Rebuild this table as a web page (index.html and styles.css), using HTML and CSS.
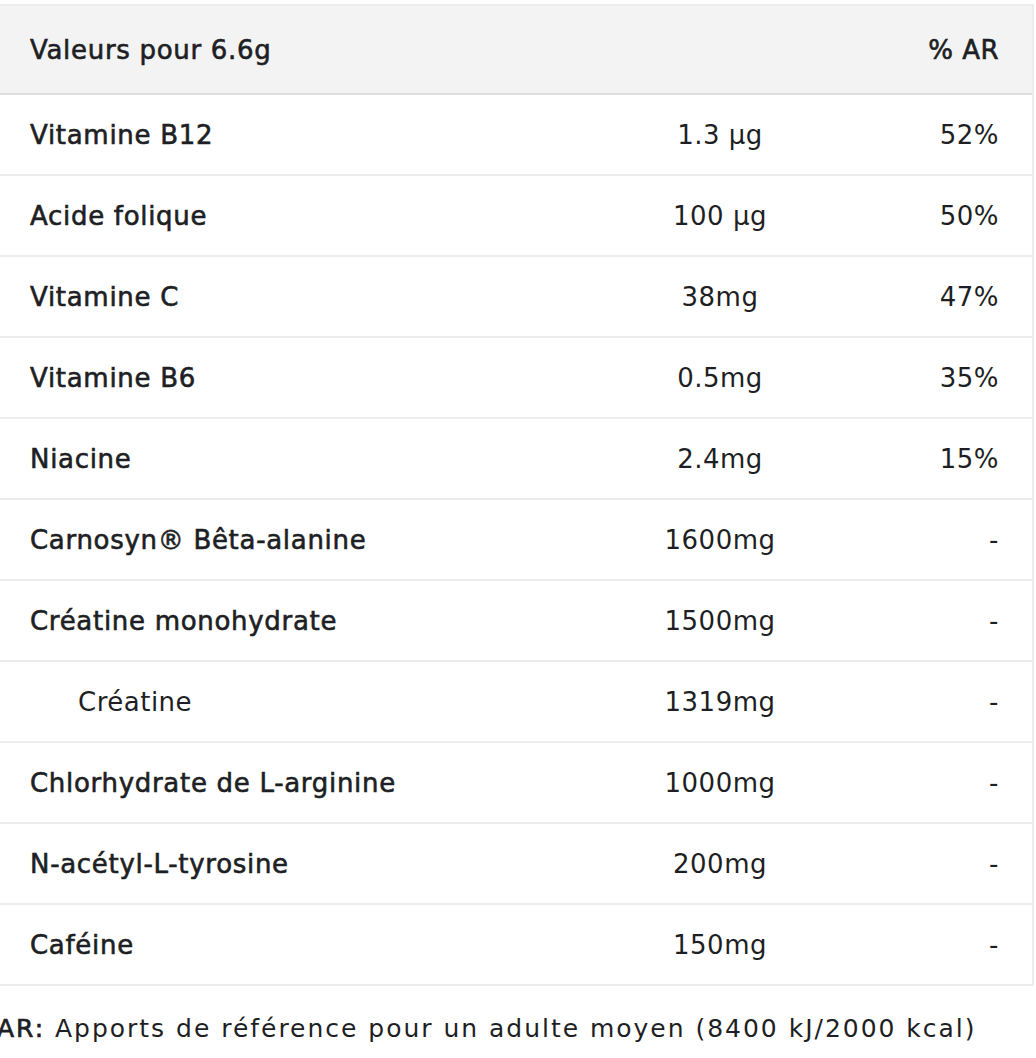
FILE: index.html
```html
<!DOCTYPE html>
<html lang="fr">
<head>
<meta charset="utf-8">
<title>Valeurs nutritionnelles</title>
<link rel="stylesheet" href="styles.css">
</head>
<body>
<div class="facts">
  <div class="row head">
    <div class="name">Valeurs pour 6.6g</div>
    <div class="val"></div>
    <div class="pct">% AR</div>
  </div>
  <div class="row"><div class="name">Vitamine B12</div><div class="val">1.3 µg</div><div class="pct">52%</div></div>
  <div class="row"><div class="name">Acide folique</div><div class="val">100 µg</div><div class="pct">50%</div></div>
  <div class="row"><div class="name">Vitamine C</div><div class="val">38mg</div><div class="pct">47%</div></div>
  <div class="row"><div class="name">Vitamine B6</div><div class="val">0.5mg</div><div class="pct">35%</div></div>
  <div class="row"><div class="name">Niacine</div><div class="val">2.4mg</div><div class="pct">15%</div></div>
  <div class="row"><div class="name">Carnosyn® Bêta-alanine</div><div class="val">1600mg</div><div class="pct">-</div></div>
  <div class="row"><div class="name">Créatine monohydrate</div><div class="val">1500mg</div><div class="pct">-</div></div>
  <div class="row"><div class="name sub">Créatine</div><div class="val">1319mg</div><div class="pct">-</div></div>
  <div class="row"><div class="name">Chlorhydrate de L-arginine</div><div class="val">1000mg</div><div class="pct">-</div></div>
  <div class="row"><div class="name">N-acétyl-L-tyrosine</div><div class="val">200mg</div><div class="pct">-</div></div>
  <div class="row last"><div class="name">Caféine</div><div class="val">150mg</div><div class="pct">-</div></div>
</div>
<p class="note"><strong>AR:</strong> Apports de référence pour un adulte moyen (8400 kJ/2000 kcal)</p>
</body>
</html>
```
FILE: styles.css
```css
html, body {
  margin: 0;
  padding: 0;
  background: #ffffff;
}
body {
  font-family: "DejaVu Sans", sans-serif;
  color: #1e1f24;
  padding-top: 4px;
  overflow: hidden;
}
.facts {
  box-sizing: border-box;
  width: 1036px;
  margin-left: -2px;
  border: 2px solid #ececec;
  border-bottom: none;
}
.row {
  box-sizing: border-box;
  display: grid;
  grid-template-columns: 560px 320px 1fr;
  align-items: center;
  height: 81px;
  border-bottom: 2px solid #ececec;
  font-size: 26px;
  letter-spacing: 0.5px;
}
.row.head {
  height: 89px;
  background: #f3f3f3;
  border-bottom-color: #dddddd;
}
.name {
  padding-left: 30px;
  letter-spacing: 0.7px;
  -webkit-text-stroke: 0.6px #1e1f24;
}
.name.sub {
  padding-left: 78px;
  letter-spacing: 0.5px;
  -webkit-text-stroke: 0;
}
.val {
  text-align: center;
}
.pct {
  text-align: right;
  padding-right: 33px;
}
.head .pct {
  -webkit-text-stroke: 0.6px #1e1f24;
}
.note {
  margin: 28px 0 0 -3px;
  font-size: 25px;
  letter-spacing: 1.98px;
  white-space: nowrap;
}
.note strong {
  font-weight: normal;
  -webkit-text-stroke: 0.7px #1e1f24;
}
```
